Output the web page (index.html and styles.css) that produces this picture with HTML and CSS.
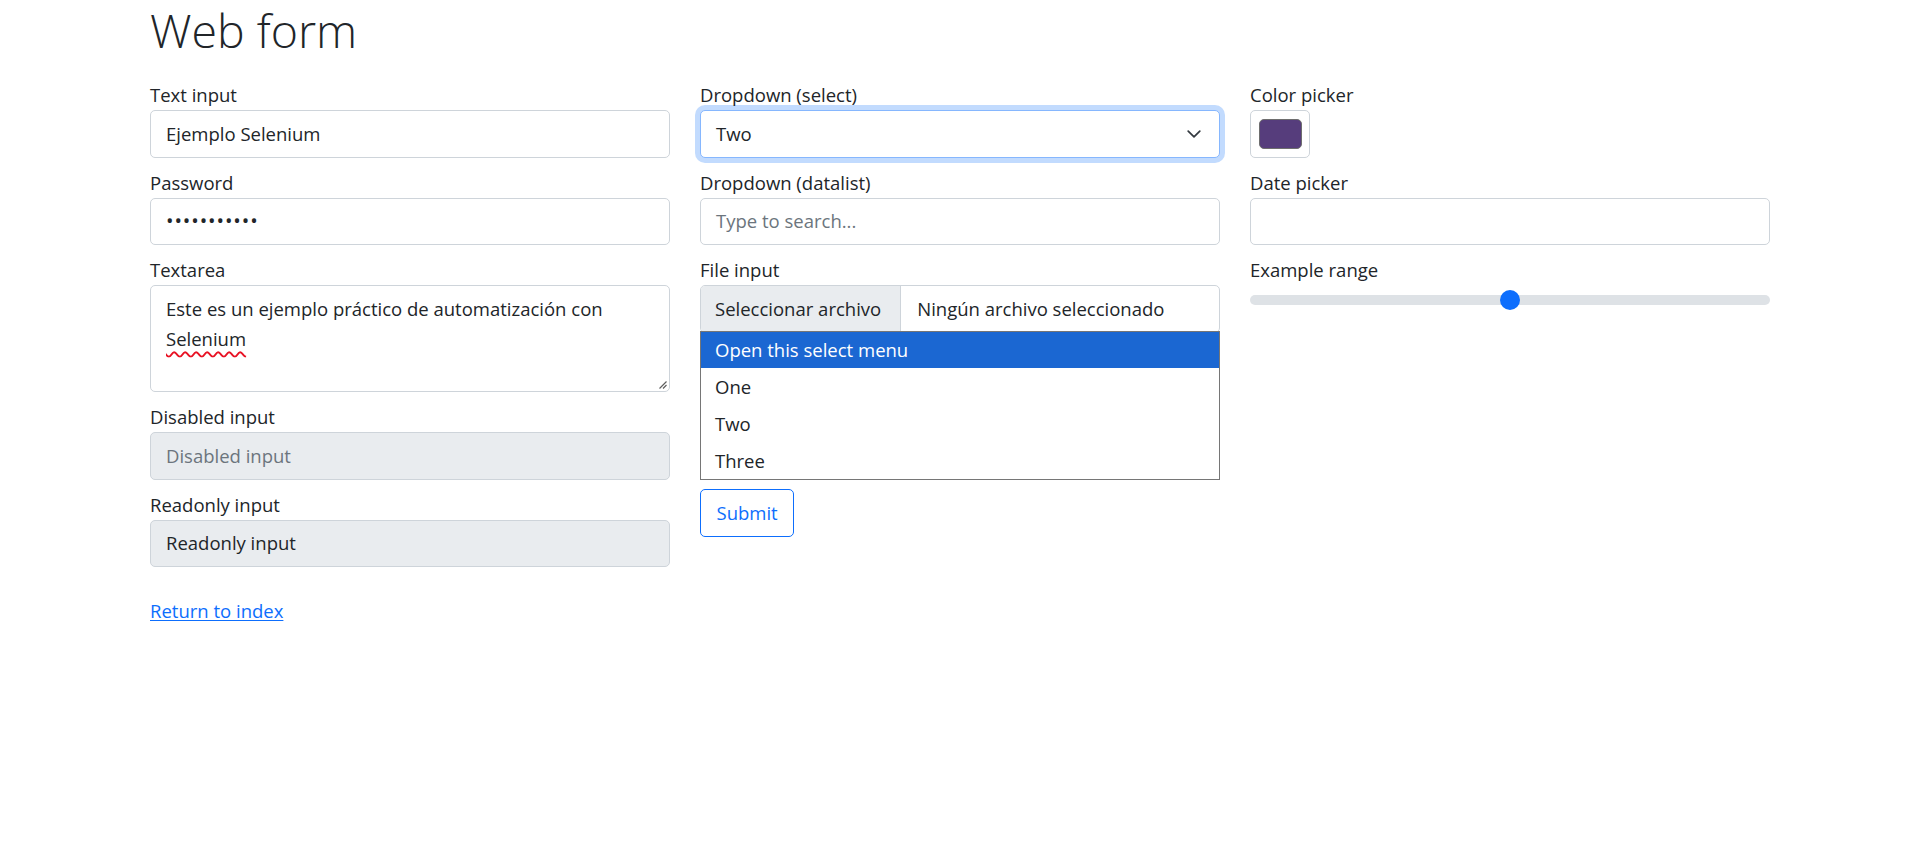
FILE: index.html
```html
<!DOCTYPE html>
<html lang="es">
<head>
<meta charset="utf-8">
<title>Web form</title>
<link rel="stylesheet" href="styles.css">
</head>
<body>
<div class="container">
  <h1 class="title">Web form</h1>
  <form class="row">
    <div class="col">
      <label class="field">
        <span class="field-label">Text input</span>
        <span class="control">Ejemplo Selenium</span>
      </label>
      <label class="field">
        <span class="field-label">Password</span>
        <span class="control"><span class="dots">•••••••••••</span></span>
      </label>
      <label class="field">
        <span class="field-label">Textarea</span>
        <span class="control textarea">Este es un ejemplo práctico de automatización con <span class="misspelled">Selenium</span>
          <svg class="resize" width="9" height="9" viewBox="0 0 9 9"><path d="M8.5 1.5 1.5 8.5M8.5 5 5 8.5" stroke="#5f5f5f" stroke-width="1.2" fill="none"/></svg>
        </span>
      </label>
      <label class="field">
        <span class="field-label">Disabled input</span>
        <span class="control disabled placeholder">Disabled input</span>
      </label>
      <label class="field">
        <span class="field-label">Readonly input</span>
        <span class="control disabled">Readonly input</span>
      </label>
      <a class="link" href="#">Return to index</a>
    </div>

    <div class="col">
      <label class="field">
        <span class="field-label">Dropdown (select)</span>
        <span class="control select focus">
          <span class="select-value">Two</span>
          <svg class="chevron" width="14" height="8" viewBox="0 0 14 8"><path d="M1.2 1.2 7 6.8l5.8-5.6" stroke="#343a40" stroke-width="1.7" stroke-linecap="round" stroke-linejoin="round" fill="none"/></svg>
        </span>
      </label>
      <label class="field">
        <span class="field-label">Dropdown (datalist)</span>
        <span class="control placeholder">Type to search...</span>
      </label>
      <div class="field file-field">
        <span class="field-label">File input</span>
        <span class="control file">
          <span class="file-btn">Seleccionar archivo</span>
          <span class="file-name">Ningún archivo seleccionado</span>
        </span>
        <div class="popup">
          <div class="option active">Open this select menu</div>
          <div class="option">One</div>
          <div class="option">Two</div>
          <div class="option">Three</div>
        </div>
      </div>
      <button type="button" class="btn">Submit</button>
    </div>

    <div class="col">
      <label class="field">
        <span class="field-label">Color picker</span>
        <span class="control color"><span class="swatch"></span></span>
      </label>
      <label class="field">
        <span class="field-label">Date picker</span>
        <span class="control"></span>
      </label>
      <label class="field">
        <span class="field-label">Example range</span>
        <span class="range"><span class="track"></span><span class="thumb"></span></span>
      </label>
    </div>
  </form>
</div>
</body>
</html>
```
FILE: styles.css
```css
html, body {
  margin: 0;
  padding: 0;
  background: #fff;
}
body {
  font-family: "Open Sans", "Noto Sans", sans-serif;
  font-size: 18.5px;
  line-height: 30px;
  color: #212529;
}
.container {
  box-sizing: border-box;
  width: 1650px;
  margin: 0 auto;
  padding: 0 15px;
}
.title {
  margin: 0 0 10px;
  font-size: 46.5px;
  font-weight: 300;
  line-height: 60px;
  color: #212529;
}
.row {
  display: grid;
  grid-template-columns: 520px 520px 520px;
  column-gap: 30px;
  margin: 0;
}
.col {
  padding: 10px 0;
  display: flex;
  flex-direction: column;
  align-items: flex-start;
}
.field {
  display: block;
  width: 100%;
  margin-bottom: 10px;
}
.field-label {
  display: block;
  height: 30px;
  line-height: 30px;
}
.control {
  box-sizing: border-box;
  display: flex;
  align-items: center;
  width: 100%;
  height: 47.5px;
  padding: 7.5px 15px;
  border: 1px solid #ced4da;
  border-radius: 5px;
  background: #fff;
  color: #212529;
  white-space: nowrap;
}
.dots {
  font-size: 20px;
  letter-spacing: 0.9px;
}
.textarea {
  position: relative;
  display: block;
  height: 107px;
  white-space: normal;
}
.misspelled {
  text-decoration: underline wavy #e81123;
  text-decoration-thickness: 1.6px;
  text-underline-offset: 5px;
  text-decoration-skip-ink: none;
}
.resize {
  position: absolute;
  right: 2px;
  bottom: 2px;
}
.disabled {
  background: #e9ecef;
}
.placeholder {
  color: #6c757d;
}
.link {
  margin-top: 19px;
  color: #0d6efd;
  text-decoration: underline;
  text-underline-offset: 2px;
}
.select {
  justify-content: space-between;
  padding-right: 18px;
}
.focus {
  border-color: #86b7fe;
  box-shadow: 0 0 0 5px rgba(13, 110, 253, 0.25);
}
.chevron {
  display: block;
}
.file-field {
  position: relative;
}
.file {
  padding: 0;
  overflow: hidden;
}
.file-btn {
  align-self: stretch;
  display: flex;
  align-items: center;
  padding: 0 19px 0 14px;
  background: #e9ecef;
  border-right: 1px solid #ced4da;
  margin-right: 16px;
}
.popup {
  position: absolute;
  left: 0;
  right: 0;
  top: 76px;
  box-sizing: border-box;
  border: 1px solid #767676;
  background: #fff;
  z-index: 2;
}
.option {
  height: 37px;
  line-height: 37px;
  padding-left: 14px;
  color: #212529;
}
.option.active {
  height: 36px;
  line-height: 36px;
  background: #1b67d2;
  color: #fff;
}
.btn {
  margin-top: 146.5px;
  box-sizing: border-box;
  height: 47.5px;
  padding: 7.5px 15.5px;
  border: 1px solid #0d6efd;
  border-radius: 5px;
  background: #fff;
  color: #0d6efd;
  font-family: inherit;
  font-size: 18.5px;
  line-height: 30px;
}
.color {
  width: 60px;
  padding: 7.5px;
}
.swatch {
  box-sizing: border-box;
  display: block;
  width: 100%;
  height: 100%;
  border: 1px solid #6e6e6e;
  border-radius: 5px;
  background: #563d7c;
}
.range {
  position: relative;
  display: flex;
  align-items: center;
  height: 30px;
  width: 100%;
}
.track {
  display: block;
  width: 100%;
  height: 10px;
  border-radius: 10px;
  background: #dee2e6;
}
.thumb {
  position: absolute;
  left: 250px;
  top: 5px;
  width: 20px;
  height: 20px;
  border-radius: 50%;
  background: #0d6efd;
}
```
